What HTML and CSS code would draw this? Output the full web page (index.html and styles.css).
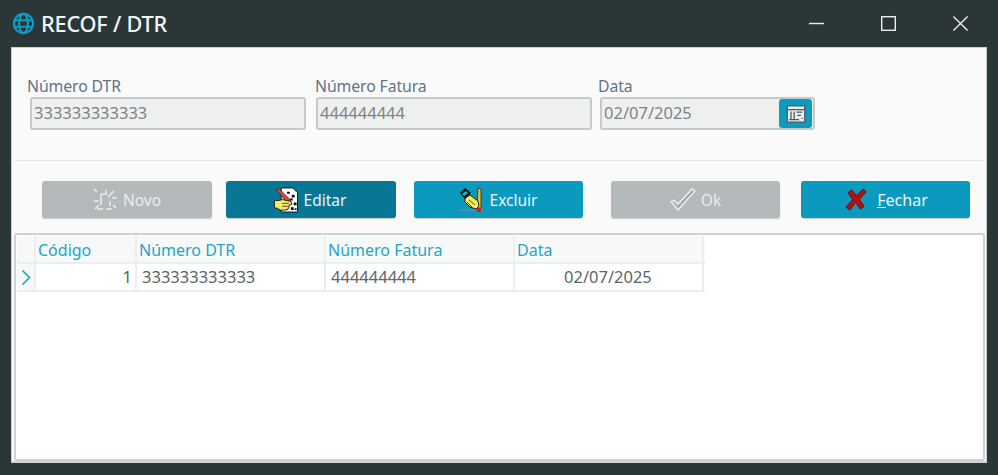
FILE: index.html
```html
<!DOCTYPE html>
<html lang="pt">
<head>
<meta charset="utf-8">
<title>RECOF / DTR</title>
<link rel="stylesheet" href="styles.css">
</head>
<body>
<div class="window">
  <header class="titlebar">
    <svg class="globe" viewBox="0 0 24 24" fill="none" stroke="#0f9cc0" stroke-width="2.2">
      <circle cx="12" cy="12" r="10"/><ellipse cx="12" cy="12" rx="4.6" ry="10"/><path d="M2.6 8.6h18.8M2.6 15.4h18.8"/>
    </svg>
    <span class="title">RECOF / DTR</span>
    <div class="winctl">
      <svg viewBox="0 0 18 18" stroke="#e8ecec" stroke-width="1.5" fill="none"><path d="M1 9h16"/></svg>
      <svg viewBox="0 0 18 18" stroke="#e8ecec" stroke-width="1.5" fill="none"><rect x="1.8" y="1.8" width="14.4" height="14.4"/></svg>
      <svg viewBox="0 0 18 18" stroke="#e8ecec" stroke-width="1.5" fill="none"><path d="M1.500 1.500l15 15M16.500 1.500l-15 15"/></svg>
    </div>
  </header>
  <main class="panel">
    <section class="form">
      <div class="field f-a"><label>Número DTR</label><div class="input">333333333333</div></div>
      <div class="field f-b"><label>Número Fatura</label><div class="input">444444444</div></div>
      <div class="field f-c"><label>Data</label>
        <div class="input">02/07/2025
          <span class="calbtn">
            <svg viewBox="0 0 16 16" fill="none" stroke="#4d5a5c" stroke-width="1"><rect x="1" y="1.500" width="14" height="13" fill="#e9eeee"/><path d="M1 4.500h14M4 6v6M6.500 6v6M2.500 12.500h8M8.500 6.500h4.500M9 9h3M12.500 11.500h1"/></svg>
          </span>
        </div>
      </div>
    </section>
    <nav class="toolbar">
      <button class="btn off b1">
        <svg viewBox="0 0 26 26" fill="none" stroke="#e9eded" stroke-width="1.500"><path d="M9 7h5M9 7v11M2 14h5M5 22h6M14 22h6M18 14v5M16 10l6-6M14 8V3M20 11h5M5 5L2 2M7 18l-4 4M21 18l3 3"/></svg>
        <span>Novo</span></button>
      <button class="btn dark b2">
        <svg viewBox="0 0 26 27"><path d="M8 1h12l5 5v20H8z" fill="#fff" stroke="#111"/><path d="M14 5h3v2h-3zM19 8h3v3h-3zM17 12h3v2h-3zM21 16h3v3h-3zM18 21h3v3h-3zM12 22h3v2h-3zM22 22h2v2h-2z" fill="#111"/><path d="M3 3l2-2 13 13-2 3-2-1z" fill="#d8483a" stroke="#222" stroke-width=".8"/><path d="M1 14h5l3-1 9 2 1 3-3 1v3l-3 2H7l-3-2H1z" fill="#f6ec62" stroke="#222"/><path d="M9 17h7M9 20h6" stroke="#222" stroke-width=".8"/></svg>
        <span>Editar</span></button>
      <button class="btn blue b3">
        <svg viewBox="0 0 26 26"><path d="M1 23h23" stroke="#7d8a8c" stroke-width="1.300"/><path d="M19 1l3 1v19h-4z" fill="#e8c72e" stroke="#222" stroke-width=".8"/><path d="M18 21h4v4h-4z" fill="#d21b1b"/><path d="M6 11l5-3 8 6 1 5-3 3-6-2-5-5z" fill="#f6ec62" stroke="#222"/><path d="M10 13l6 5M8 15l5 5" stroke="#222" stroke-width=".8"/><path d="M1 6l5-5 6 5-6 6z" fill="#111"/><path d="M3 7l4-3 2 2-4 3z" fill="#1fb6d6"/></svg>
        <span>Excluir</span></button>
      <button class="btn off b4">
        <svg viewBox="0 0 26 26" fill="none" stroke="#eef1f1" stroke-width="1.300"><path d="M1 15l3-2 4 4L22 2l3 2L8 23z"/><path d="M8 20L23 4" stroke="#9aa3a4"/></svg>
        <span>Ok</span></button>
      <button class="btn blue b5">
        <svg viewBox="0 0 24 24"><path d="M3 5l4-3 5 6 7-7 3 3-7 8 5 7-4 3-5-7-6 8-4-3 7-8z" fill="#b30f0f" stroke="#6e0b0b"/></svg>
        <span><u>F</u>echar</span></button>
    </nav>
    <section class="grid">
      <div class="row head">
        <div class="cell c0"></div>
        <div class="cell c1">Código</div>
        <div class="cell c2">Número DTR</div>
        <div class="cell c3">Número Fatura</div>
        <div class="cell c4">Data</div>
      </div>
      <div class="row body">
        <div class="cell c0"><svg viewBox="0 0 10 16" fill="none" stroke="#0f9cc0" stroke-width="1.500"><path d="M1.500 1l7 7-7 7"/></svg></div>
        <div class="cell c1 num">1</div>
        <div class="cell c2">333333333333</div>
        <div class="cell c3">444444444</div>
        <div class="cell c4 date">02/07/2025</div>
      </div>
    </section>
  </main>
</div>
</body>
</html>
```
FILE: styles.css
```css
* { box-sizing: border-box; }
html, body { margin: 0; height: 100%; }
body { background: #2b3638; font-family: "Noto Sans", "Open Sans", sans-serif; color: #5c6668; overflow: hidden; }
.window { width: 998px; height: 475px; display: flex; flex-direction: column; padding: 0 11px 12px; }
.titlebar { height: 47px; flex: none; display: flex; align-items: center; color: #fff; }
.globe { width: 23px; height: 23px; margin: 0 6px 0 1px; flex: none; }
.title { font-size: 21.700px; font-weight: 500; letter-spacing: -0.2px; color: #f5f8f8; }
.winctl { margin-left: auto; display: flex; gap: 55px; margin-right: 18px; }
.winctl svg { width: 17px; height: 17px; display: block; }
.panel { flex: 1; background: #fafafa; border: 1px solid #c9cfd0; border-bottom: 2px solid #cfd4d5; display: flex; flex-direction: column; padding: 0 1px 0 2px; }
.form { height: 113px; padding: 27px 0 0 13px; display: flex; border-bottom: 1px solid #e6e8e8; flex: none; }
.field { display: flex; flex-direction: column; }
.field label { font-size: 15.800px; line-height: 22px; height: 22px; color: #5f7488; letter-spacing: -0.1px; }
.f-a { width: 288px; }
.f-b { width: 284px; }
.input { margin: 0 0 0 3px; height: 33px; background: #eef0f0; border: 2px solid #c4cacb; border-radius: 3px; font-size: 16.500px; line-height: 28px; padding-left: 2px; color: #7d8486; display: flex; position: relative; }
.f-a .input { width: 276px; }
.f-b .input { width: 276px; margin-left: 1px; }
.f-c .input { width: 215px; margin-left: 1px; }
.f-c label { margin-left: -1px; }
.calbtn { position: absolute; right: 1px; top: 0; width: 33px; height: 29px; background: #0b9cc0; border-radius: 3px; display: flex; align-items: center; justify-content: center; }
.calbtn svg { width: 20px; height: 20px; }
.toolbar { height: 72px; flex: none; display: flex; align-items: flex-start; padding: 20px 0 0 28px; }
.btn { height: 37px; border: 0; border-radius: 3px; display: flex; align-items: center; justify-content: center; gap: 5px; font-family: inherit; font-size: 15.500px; color: #eef4f5; padding: 0; box-shadow: 0 1px 1px #c9cccc; }
.btn svg { width: 26px; height: 26px; flex: none; }
.btn.off { background: #b4babb; color: #e8ecec; }
.btn.dark { background: #087795; }
.btn.blue { background: #0b9abd; }
.b1 { width: 170px; margin-right: 14px; padding-right: 1px; }
.b2 { width: 170px; margin-right: 18px; padding-right: 3px; }
.b3 { width: 169px; margin-right: 28px; padding-right: 1px; }
.b4 { width: 169px; margin-right: 21px; }
.b5 { width: 169px; font-size: 16px; padding-left: 2px; }
.b5 svg { width: 23px; height: 23px; margin-right: 4px; }
.grid { flex: 1; background: #fff; border: 2px solid #cdd3d4; border-radius: 3px; padding-top: 1px; padding-left: 1px; }
.row { display: flex; width: 688px; }
.cell { border-right: 2px solid #eceeee; flex: none; white-space: nowrap; overflow: hidden; }
.head { height: 28px; background: #f7f8f8; border-bottom: 2px solid #eceeee; color: #24a5c8; line-height: 28px; font-size: 16px; }
.body { height: 28px; border-bottom: 2px solid #eceeee; color: #5c6668; line-height: 26px; font-size: 16.500px; }
.head .cell { height: 26px; padding-left: 2px; }
.body .cell { height: 26px; padding-left: 5px; }
.c0 { width: 19px; background: #f7f8f8; }
.body .c0 { padding: 5px 0 0 4px; }
.c0 svg { width: 10px; height: 17px; display: block; }
.c1 { width: 101px; }
.c2 { width: 189px; }
.c3 { width: 189px; }
.c4 { width: 189px; }
.body .num { text-align: right; padding-right: 3px; }
.body .date { padding-left: 49px; }
```
